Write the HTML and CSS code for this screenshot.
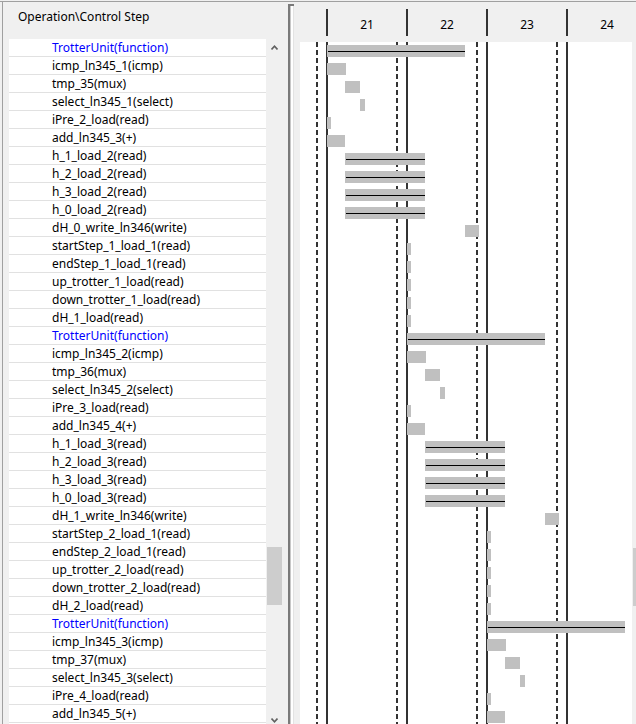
FILE: index.html
```html
<!DOCTYPE html>
<html>
<head>
<meta charset="utf-8">
<link rel="stylesheet" href="styles.css">
</head>
<body>
<div class="frame">
  <div class="left">
    <div class="lhead">Operation\Control Step</div>
    <div class="list">
      <div class="rows">
        <div class="row fn">TrotterUnit(function)</div>
        <div class="row">icmp_ln345_1(icmp)</div>
        <div class="row">tmp_35(mux)</div>
        <div class="row">select_ln345_1(select)</div>
        <div class="row">iPre_2_load(read)</div>
        <div class="row">add_ln345_3(+)</div>
        <div class="row">h_1_load_2(read)</div>
        <div class="row">h_2_load_2(read)</div>
        <div class="row">h_3_load_2(read)</div>
        <div class="row">h_0_load_2(read)</div>
        <div class="row">dH_0_write_ln346(write)</div>
        <div class="row">startStep_1_load_1(read)</div>
        <div class="row">endStep_1_load_1(read)</div>
        <div class="row">up_trotter_1_load(read)</div>
        <div class="row">down_trotter_1_load(read)</div>
        <div class="row">dH_1_load(read)</div>
        <div class="row fn">TrotterUnit(function)</div>
        <div class="row">icmp_ln345_2(icmp)</div>
        <div class="row">tmp_36(mux)</div>
        <div class="row">select_ln345_2(select)</div>
        <div class="row">iPre_3_load(read)</div>
        <div class="row">add_ln345_4(+)</div>
        <div class="row">h_1_load_3(read)</div>
        <div class="row">h_2_load_3(read)</div>
        <div class="row">h_3_load_3(read)</div>
        <div class="row">h_0_load_3(read)</div>
        <div class="row">dH_1_write_ln346(write)</div>
        <div class="row">startStep_2_load_1(read)</div>
        <div class="row">endStep_2_load_1(read)</div>
        <div class="row">up_trotter_2_load(read)</div>
        <div class="row">down_trotter_2_load(read)</div>
        <div class="row">dH_2_load(read)</div>
        <div class="row fn">TrotterUnit(function)</div>
        <div class="row">icmp_ln345_3(icmp)</div>
        <div class="row">tmp_37(mux)</div>
        <div class="row">select_ln345_3(select)</div>
        <div class="row">iPre_4_load(read)</div>
        <div class="row">add_ln345_5(+)</div>
        <div class="row"></div>
      </div>
      <div class="vscroll">
        <div class="sbtn"><svg width="7" height="5" viewBox="0 0 7 5"><polyline points="0.5,4.5 3.5,1.2 6.5,4.5" fill="none" stroke="#606060" stroke-width="1.6"/></svg></div>
        <div class="vthumb"></div>
        <div class="sbtn down"><svg width="7" height="5" viewBox="0 0 7 5"><polyline points="0.5,0.5 3.5,3.8 6.5,0.5" fill="none" stroke="#606060" stroke-width="1.6"/></svg></div>
      </div>
    </div>
  </div>
  <div class="splitter"></div>
  <div class="right">
    <div class="rhead">
      <div class="step">21</div>
      <div class="step">22</div>
      <div class="step">23</div>
      <div class="step">24</div>
    </div>
    <div class="chartwrap">
      <div class="chart">
        <div class="vl dash" style="left:16px"></div>
        <div class="vl solid" style="left:26px"></div>
        <div class="vl dash" style="left:96px"></div>
        <div class="vl solid" style="left:106px"></div>
        <div class="vl dash" style="left:176px"></div>
        <div class="vl solid" style="left:186px"></div>
        <div class="vl dash" style="left:256px"></div>
        <div class="vl solid" style="left:266px"></div>
        <div class="crows">
          <div class="crow"><div class="bar fnbar" style="margin-left:27px;width:138px"></div></div>
          <div class="crow"><div class="bar" style="margin-left:27px;width:19px"></div></div>
          <div class="crow"><div class="bar" style="margin-left:45px;width:15px"></div></div>
          <div class="crow"><div class="bar" style="margin-left:60px;width:5px"></div></div>
          <div class="crow"><div class="bar" style="margin-left:27px;width:4px"></div></div>
          <div class="crow"><div class="bar" style="margin-left:27px;width:18px"></div></div>
          <div class="crow"><div class="bar fnbar" style="margin-left:45px;width:80px"></div></div>
          <div class="crow"><div class="bar fnbar" style="margin-left:45px;width:80px"></div></div>
          <div class="crow"><div class="bar fnbar" style="margin-left:45px;width:80px"></div></div>
          <div class="crow"><div class="bar fnbar" style="margin-left:45px;width:80px"></div></div>
          <div class="crow"><div class="bar" style="margin-left:165px;width:14px"></div></div>
          <div class="crow"><div class="bar" style="margin-left:107px;width:4px"></div></div>
          <div class="crow"><div class="bar" style="margin-left:107px;width:4px"></div></div>
          <div class="crow"><div class="bar" style="margin-left:107px;width:4px"></div></div>
          <div class="crow"><div class="bar" style="margin-left:107px;width:4px"></div></div>
          <div class="crow"><div class="bar" style="margin-left:107px;width:4px"></div></div>
          <div class="crow"><div class="bar fnbar" style="margin-left:107px;width:138px"></div></div>
          <div class="crow"><div class="bar" style="margin-left:107px;width:19px"></div></div>
          <div class="crow"><div class="bar" style="margin-left:125px;width:15px"></div></div>
          <div class="crow"><div class="bar" style="margin-left:140px;width:5px"></div></div>
          <div class="crow"><div class="bar" style="margin-left:107px;width:4px"></div></div>
          <div class="crow"><div class="bar" style="margin-left:107px;width:18px"></div></div>
          <div class="crow"><div class="bar fnbar" style="margin-left:125px;width:80px"></div></div>
          <div class="crow"><div class="bar fnbar" style="margin-left:125px;width:80px"></div></div>
          <div class="crow"><div class="bar fnbar" style="margin-left:125px;width:80px"></div></div>
          <div class="crow"><div class="bar fnbar" style="margin-left:125px;width:80px"></div></div>
          <div class="crow"><div class="bar" style="margin-left:245px;width:14px"></div></div>
          <div class="crow"><div class="bar" style="margin-left:187px;width:4px"></div></div>
          <div class="crow"><div class="bar" style="margin-left:187px;width:4px"></div></div>
          <div class="crow"><div class="bar" style="margin-left:187px;width:4px"></div></div>
          <div class="crow"><div class="bar" style="margin-left:187px;width:4px"></div></div>
          <div class="crow"><div class="bar" style="margin-left:187px;width:4px"></div></div>
          <div class="crow"><div class="bar fnbar" style="margin-left:187px;width:138px"></div></div>
          <div class="crow"><div class="bar" style="margin-left:187px;width:19px"></div></div>
          <div class="crow"><div class="bar" style="margin-left:205px;width:15px"></div></div>
          <div class="crow"><div class="bar" style="margin-left:220px;width:5px"></div></div>
          <div class="crow"><div class="bar" style="margin-left:187px;width:4px"></div></div>
          <div class="crow"><div class="bar" style="margin-left:187px;width:18px"></div></div>
        </div>
      </div>
      <div class="rscroll"><div class="rthumb"></div></div>
    </div>
  </div>
</div>
</body>
</html>
```

FILE: styles.css
```css
html, body {
  margin: 0;
  padding: 0;
}
body {
  background: #f0f0f0;
  font-family: "Noto Sans", "Liberation Sans", sans-serif;
  font-size: 12px;
  color: #000;
  width: 636px;
  height: 724px;
  overflow: hidden;
}
.frame {
  margin-top: 1px;
  border-top: 1px solid #a0a0a0;
  height: 722px;
  display: flex;
  overflow: hidden;
}
.left {
  margin-left: 2px;
  border-left: 1px solid #a0a0a0;
  width: 285px;
  flex: none;
  display: flex;
  flex-direction: column;
}
.lhead {
  height: 37px;
  box-sizing: border-box;
  padding: 7px 0 0 15px;
  line-height: 16px;
  white-space: nowrap;
}
.list {
  flex: 1;
  display: flex;
  margin-left: 6px;
  overflow: hidden;
}
.rows {
  width: 257px;
  background: #fff;
  flex: none;
}
.row {
  height: 17px;
  line-height: 17px;
  border-bottom: 1px solid #e1e1e1;
  padding-left: 43px;
  white-space: nowrap;
  overflow: hidden;
}
.row.fn {
  color: #0000ff;
}
.vscroll {
  width: 17px;
  flex: none;
  display: flex;
  flex-direction: column;
  background: #f0f0f0;
}
.sbtn {
  height: 17px;
  display: flex;
  align-items: center;
  justify-content: center;
  flex: none;
}
.sbtn svg {
  display: block;
}
.sbtn.down {
  margin-top: 107px;
}
.vthumb {
  margin: 491px 1px 0 1px;
  height: 58px;
  background: #cdcdcd;
  flex: none;
}
.splitter {
  width: 6px;
  flex: none;
  margin-top: 2px;
  border-top: 2px solid #7a7a7a;
  background: linear-gradient(to right, #7a7a7a 0 2px, #c8c8c8 2px 3px, #ffffff 3px 5px, #e3e3e3 5px 6px);
}
.right {
  flex: 1;
  padding-left: 6px;
  display: flex;
  flex-direction: column;
  overflow: hidden;
}
.rhead {
  height: 40px;
  flex: none;
  display: flex;
  padding-left: 26px;
  overflow: hidden;
}
.step {
  width: 80px;
  flex: none;
  box-sizing: border-box;
  border-left: 2px solid #333;
  margin-top: 7px;
  height: 27px;
  padding-top: 8px;
  line-height: 16px;
  text-align: center;
}
.chartwrap {
  flex: 1;
  display: flex;
}
.chart {
  width: 332px;
  flex: none;
  background: #fff;
  position: relative;
  overflow: hidden;
}
.vl {
  position: absolute;
  top: 0;
  bottom: 0;
  width: 2px;
  z-index: 0;
}
.vl.solid {
  background: #333;
}
.vl.dash {
  background: repeating-linear-gradient(to bottom, #333 0 5px, transparent 5px 8px);
}
.crows {
  position: relative;
  z-index: 1;
}
.crow {
  height: 18px;
  box-sizing: border-box;
  padding-top: 3px;
}
.bar {
  height: 12px;
  background: #c0c0c0;
  position: relative;
}
.bar.fnbar::after {
  content: "";
  position: absolute;
  left: 1px;
  right: 0;
  top: 6px;
  height: 1px;
  background: #000;
}
.rscroll {
  flex: 1;
  background: #f0f0f0;
  padding-top: 506px;
}
.rthumb {
  margin-left: 1px;
  height: 58px;
  background: #cdcdcd;
}
```
